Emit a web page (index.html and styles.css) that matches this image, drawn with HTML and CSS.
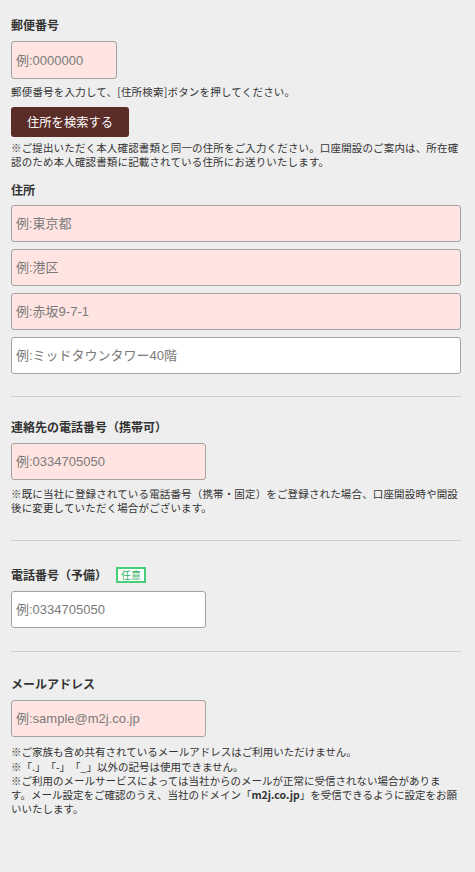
FILE: index.html
```html
<!DOCTYPE html>
<html lang="ja">
<head>
<meta charset="utf-8">
<title>フォーム</title>
<link rel="stylesheet" href="styles.css">
</head>
<body>
<div class="page">
  <section class="field first">
    <div class="label">郵便番号</div>
    <input class="input req postal" type="text" placeholder="例:0000000">
    <p class="help">郵便番号を入力して、[住所検索]ボタンを押してください。</p>
    <button class="btn" type="button">住所を検索する</button>
    <p class="note tight">※ご提出いただく本人確認書類と同一の住所をご入力ください。口座開設のご案内は、所在確<br>認のため本人確認書類に記載されている住所にお送りいたします。</p>
  </section>

  <section class="field address">
    <div class="label">住所</div>
    <div class="stack">
      <input class="input req" type="text" placeholder="例:東京都">
      <input class="input req" type="text" placeholder="例:港区">
      <input class="input req" type="text" placeholder="例:赤坂9-7-1">
      <input class="input" type="text" placeholder="例:ミッドタウンタワー40階">
    </div>
  </section>

  <hr class="divider d1">

  <section class="field">
    <div class="label">連絡先の電話番号（携帯可）</div>
    <input class="input req short" type="text" placeholder="例:0334705050">
    <p class="note">※既に当社に登録されている電話番号（携帯・固定）をご登録された場合、口座開設時や開設<br>後に変更していただく場合がございます。</p>
  </section>

  <hr class="divider d2">

  <section class="field">
    <div class="label">電話番号（予備）<span class="badge">任意</span></div>
    <input class="input short" type="text" placeholder="例:0334705050">
  </section>

  <hr class="divider d3">

  <section class="field">
    <div class="label">メールアドレス</div>
    <input class="input req short" type="text" placeholder="例:sample@m2j.co.jp">
    <p class="note mail">※ご家族も含め共有されているメールアドレスはご利用いただけません。<br>※「.」「-」「_」以外の記号は使用できません。<br>※ご利用のメールサービスによっては当社からのメールが正常に受信されない場合がありま<br>す。メール設定をご確認のうえ、当社のドメイン「<b>m2j.co.jp</b>」を受信できるように設定をお願<br>いいたします。</p>
  </section>
</div>
</body>
</html>
```

FILE: styles.css
```css
html, body {
  margin: 0;
  padding: 0;
  background: #eeeeee;
}

body {
  font-family: "Noto Sans CJK JP", "Noto Sans", sans-serif;
  color: #333333;
  text-spacing-trim: space-all;
}

.page {
  padding: 16px 14px 40px 11px;
  width: 450px;
}

.field {
  display: flex;
  flex-direction: column;
  align-items: flex-start;
}

.label {
  font-size: 12px;
  font-weight: bold;
  line-height: 18px;
  margin-bottom: 7px;
  display: flex;
  align-items: center;
}

.address {
  margin-top: 12px;
}

.address .label {
  margin-bottom: 6px;
}

.stack {
  display: flex;
  flex-direction: column;
  gap: 7px;
  width: 100%;
}

.input {
  box-sizing: border-box;
  width: 100%;
  height: 37px;
  margin: 0;
  padding: 0 4px;
  border: 1px solid #a3a3a3;
  border-radius: 3px;
  background: #ffffff;
  font-family: "Liberation Sans", "Noto Sans CJK JP", sans-serif;
  font-size: 13px;
  color: #333333;
  outline: none;
}

.input::placeholder {
  color: #7a7a7a;
}

.input.req {
  background: #ffe4e1;
}

.postal {
  width: 106px;
  height: 38px;
}

.short {
  width: 195px;
}

.help {
  margin: 6px 0 0;
  font-size: 10.5px;
  letter-spacing: 0.2px;
  line-height: 14px;
}

.btn {
  margin-top: 8px;
  height: 30px;
  padding: 0 16px;
  border: none;
  border-radius: 3px;
  background: #5b2d28;
  color: #ffffff;
  font-family: "Noto Sans CJK JP", sans-serif;
  font-size: 12.3px;
  line-height: 30px;
  cursor: pointer;
}

.note {
  margin: 7px 0 0;
  font-size: 10.5px;
  letter-spacing: 0.15px;
  line-height: 14.2px;
  width: 100%;
}

.note b {
  font-weight: 600;
}

.note.tight {
  margin-top: 4px;
  line-height: 14px;
}

.note.mail {
  margin-top: 8px;
  letter-spacing: 0;
}

.divider {
  border: none;
  height: 1px;
  background: #cccccc;
  margin: 0;
  width: 100%;
}

.d1 {
  margin: 22px 0 21px;
}

.d2 {
  margin: 25px 0 25px;
}

.d3 {
  margin: 23px 0 23px;
}

.badge {
  display: inline-block;
  box-sizing: border-box;
  height: 16px;
  margin-left: 9px;
  padding: 0 3px;
  border: 2px solid #46cf78;
  background: #ffffff;
  color: #2fb25f;
  font-size: 10px;
  font-weight: normal;
  line-height: 12px;
}
```
